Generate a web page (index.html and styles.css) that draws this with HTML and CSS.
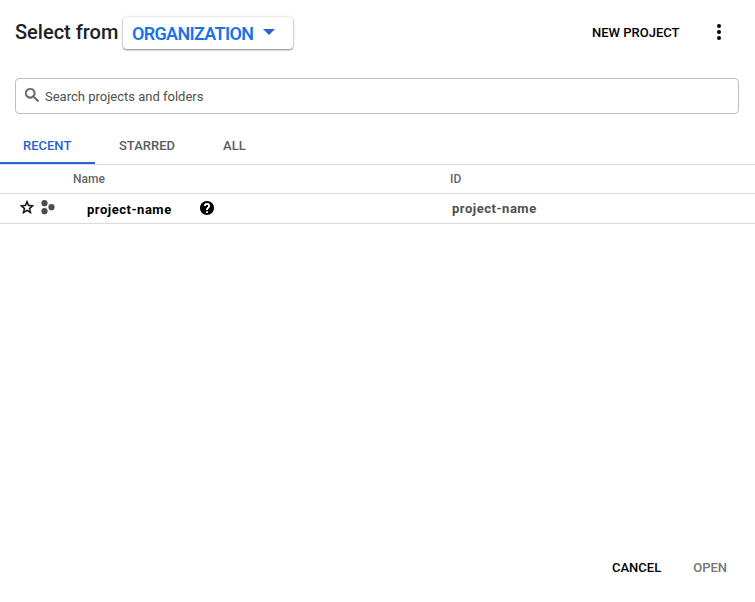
FILE: index.html
```html
<!DOCTYPE html>
<html lang="en">
<head>
<meta charset="utf-8">
<title>Select a project</title>
<link rel="stylesheet" href="styles.css">
</head>
<body>
<main class="dialog">
  <header class="header">
    <h1 class="title">Select from</h1>
    <button class="org"><span class="org-label">ORGANIZATION</span><svg class="caret" viewBox="0 0 12 6"><path d="M0 0h12L6 6z"/></svg></button>
    <button class="new-project"><span>NEW PROJECT</span></button>
    <button class="more" aria-label="More"><svg viewBox="0 0 4 16"><circle cx="2" cy="2" r="2"/><circle cx="2" cy="8" r="2"/><circle cx="2" cy="14" r="2"/></svg></button>
  </header>
  <div class="search">
    <svg class="search-icon" viewBox="3 3 17.5 17.5"><path d="M15.500 14h-.79l-.28-.27A6.470 6.470 0 0 0 16 9.500 6.500 6.500 0 1 0 9.500 16c1.610 0 3.090-.59 4.230-1.570l.27.28v.79l5 4.990L20.490 19l-4.990-5zm-6 0C7.010 14 5 11.990 5 9.500S7.010 5 9.500 5 14 7.010 14 9.500 11.990 14 9.500 14z"/></svg>
    <span class="placeholder">Search projects and folders</span>
  </div>
  <nav class="tabs">
    <a class="tab active">RECENT</a>
    <a class="tab">STARRED</a>
    <a class="tab">ALL</a>
  </nav>
  <div class="row head"><span class="col-name">Name</span><span class="col-id">ID</span></div>
  <div class="row item">
    <svg class="star" viewBox="2 2 20 19"><path d="M22 9.240l-7.190-.62L12 2 9.190 8.630 2 9.240l5.460 4.730L5.820 21 12 17.270 18.180 21l-1.630-7.030L22 9.240zM12 15.400l-3.760 2.270 1-4.280-3.320-2.880 4.380-.38L12 6.100l1.710 4.040 4.380.38-3.320 2.880 1 4.280L12 15.400z"/></svg>
    <svg class="dots" viewBox="0 0 14 15"><circle cx="3.500" cy="3.200" r="3.100"/><circle cx="10.500" cy="7.200" r="3.100"/><circle cx="3.500" cy="11.200" r="3.100"/></svg>
    <span class="name">project-name</span>
    <svg class="help" viewBox="2 2 20 20"><path d="M12 2C6.480 2 2 6.480 2 12s4.480 10 10 10 10-4.480 10-10S17.520 2 12 2zm1 17h-2v-2h2v2zm2.070-7.750l-.9.920C13.450 12.900 13 13.500 13 15h-2v-.5c0-1.100.45-2.100 1.170-2.830l1.240-1.260c.37-.36.59-.86.59-1.410 0-1.100-.9-2-2-2s-2 .9-2 2H8c0-2.210 1.790-4 4-4s4 1.790 4 4c0 .88-.36 1.680-.93 2.250z"/><path class="mark" d="M9 9a3 3 0 1 1 5.300 1.950l-1.240 1.260Q12 13.300 12 15M11 18h2"/></svg>
    <span class="id">project-name</span>
  </div>
  <footer class="footer"><button class="cancel">CANCEL</button><button class="open">OPEN</button></footer>
</main>
</body>
</html>
```
FILE: styles.css
```css
* { box-sizing: border-box; }
body { margin: 0; background: #fff; font-family: Roboto, sans-serif; color: #000; }
button { font: inherit; color: inherit; border: 0; padding: 0; background: none; }
svg { display: block; flex: none; fill: currentColor; }
.dialog { width: 755px; height: 602px; display: flex; flex-direction: column; overflow: hidden; white-space: nowrap; }
.header { height: 78px; flex: none; display: flex; align-items: flex-start; padding: 16px 34px 0 15px; }
.title { margin: 0; width: 108px; font-size: 20px; line-height: 32px; font-weight: 500; color: #202124; }
.org { width: 170px; height: 32px; margin-top: 1px; padding-left: 9px; display: flex; align-items: center; border-radius: 4px; background: #fff; box-shadow: 0 1px 2px rgba(0,0,0,.45), 0 0 3px rgba(0,0,0,.16); color: #1a73e8; }
.org-label { width: 131px; padding-top: 1px; text-align: left; font-size: 18px; line-height: 32px; font-weight: 600; letter-spacing: -.67px; }
.caret { width: 12px; height: 6px; margin-top: -2px; color: #2a62ce; }
.new-project { margin-left: auto; width: 88px; text-align: left; font-size: 13px; line-height: 34px; font-weight: 500; }
.more { margin-left: 37px; }
.more svg { width: 4px; height: 16px; margin-top: 8px; }
.search { height: 36px; flex: none; margin: 0 16px 0 15px; padding-left: 10px; border: 1px solid #c0c0c0; border-radius: 4px; display: flex; align-items: center; color: #666; }
.search-icon { width: 14px; height: 14px; margin: -3px 6px 0 -1px; stroke: currentColor; stroke-width: .6; }
.placeholder { padding-top: 2px; font-size: 13px; line-height: 20px; color: #505050; }
.tabs { height: 51px; flex: none; display: flex; border-bottom: 1px solid #dadada; color: #5c5c5c; font-size: 13px; font-weight: 500; }
.tab { height: 50px; line-height: 64px; padding: 0 24px; }
.tab.active { width: 95px; padding-left: 23px; color: #2a62ce; border-bottom: 2px solid #2a62ce; }
.row { display: flex; flex: none; border-bottom: 1px solid #dadada; }
.head { height: 29px; padding-left: 73px; font-size: 12px; line-height: 28px; font-weight: 500; color: #666; }
.col-name { width: 377px; }
.item { height: 30px; padding-left: 20px; font-size: 13px; font-weight: 700; letter-spacing: .52px; }
.star { width: 14px; height: 14px; margin-top: 6px; stroke: currentColor; stroke-width: .5; }
.dots { width: 14px; height: 15px; margin: 6px 0 0 7px; color: #4d4d4d; }
.name { width: 113px; margin-left: 32px; line-height: 31px; }
.help { width: 14px; height: 14px; margin-top: 7px; }
.mark { fill: none; stroke: #fff; stroke-width: 2.5; }
.id { margin-left: 238px; line-height: 29px; color: #505050; }
.footer { margin-top: auto; height: 51px; display: flex; justify-content: flex-end; align-items: flex-start; gap: 32px; padding-right: 28px; font-size: 13px; line-height: 34px; font-weight: 500; }
.open { color: #757575; }
```
